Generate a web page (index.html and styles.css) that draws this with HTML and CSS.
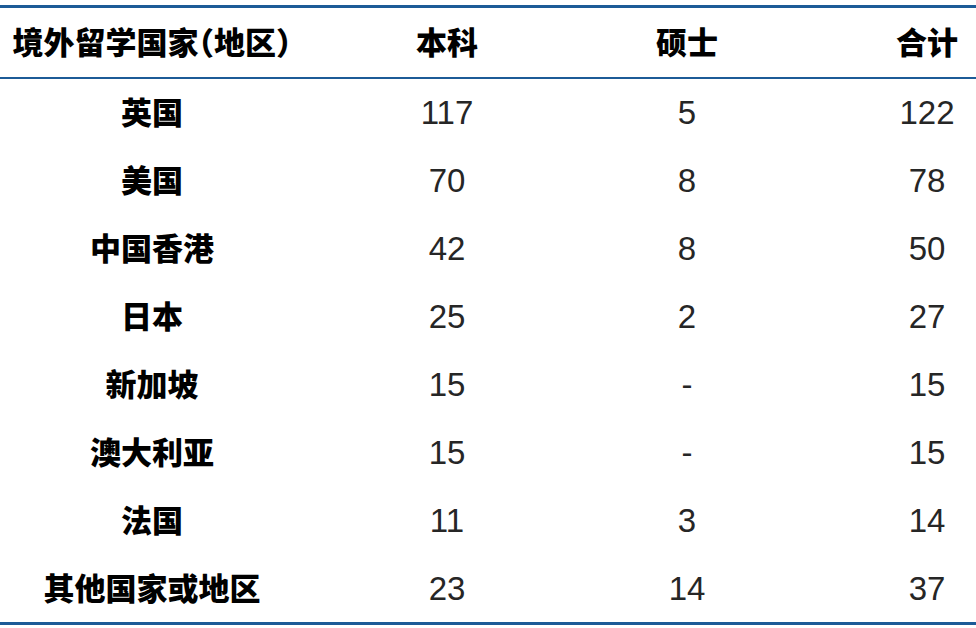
FILE: index.html
```html
<!DOCTYPE html>
<html lang="zh-CN">
<head>
<meta charset="utf-8">
<link rel="stylesheet" href="styles.css">
</head>
<body>
<div class="table">
  <div class="row head">
    <div class="cell c1">境外留学国家（地区）</div>
    <div class="cell c2">本科</div>
    <div class="cell c3">硕士</div>
    <div class="cell c4">合计</div>
  </div>
  <div class="body">
    <div class="row"><div class="cell c1">英国</div><div class="cell c2 num">117</div><div class="cell c3 num">5</div><div class="cell c4 num">122</div></div>
    <div class="row"><div class="cell c1">美国</div><div class="cell c2 num">70</div><div class="cell c3 num">8</div><div class="cell c4 num">78</div></div>
    <div class="row"><div class="cell c1">中国香港</div><div class="cell c2 num">42</div><div class="cell c3 num">8</div><div class="cell c4 num">50</div></div>
    <div class="row"><div class="cell c1">日本</div><div class="cell c2 num">25</div><div class="cell c3 num">2</div><div class="cell c4 num">27</div></div>
    <div class="row"><div class="cell c1">新加坡</div><div class="cell c2 num">15</div><div class="cell c3 num">-</div><div class="cell c4 num">15</div></div>
    <div class="row"><div class="cell c1">澳大利亚</div><div class="cell c2 num">15</div><div class="cell c3 num">-</div><div class="cell c4 num">15</div></div>
    <div class="row"><div class="cell c1">法国</div><div class="cell c2 num">11</div><div class="cell c3 num">3</div><div class="cell c4 num">14</div></div>
    <div class="row"><div class="cell c1">其他国家或地区</div><div class="cell c2 num">23</div><div class="cell c3 num">14</div><div class="cell c4 num">37</div></div>
  </div>
</div>
</body>
</html>
```
FILE: styles.css
```css
html, body {
  margin: 0;
  padding: 0;
  background: #ffffff;
}
body {
  width: 976px;
  height: 628px;
  overflow: hidden;
  font-family: "Noto Sans CJK SC", sans-serif;
}
.table {
  margin-top: 5px;
  border-top: 3px solid #1c5b97;
  border-bottom: 3px solid #1c5b97;
}
.row {
  display: grid;
  grid-template-columns: 304px 286px 194px 1fr;
  align-items: center;
  height: 67.9px;
}
.row.head {
  height: 69px;
  border-bottom: 2px solid #1c5b97;
}
.cell {
  text-align: center;
  white-space: nowrap;
  color: #111;
}
.c1, .head .cell {
  font-family: "Noto Sans CJK SC", sans-serif;
  font-weight: 900;
  font-size: 31px;
  line-height: 1;
  color: #000;
  padding-bottom: 4px;
}
.head .c1 {
  font-feature-settings: "halt";
}
.c4 {
  justify-self: end;
  width: 98px;
}
.num {
  font-family: "Liberation Sans Narrow", "Liberation Sans", sans-serif;
  font-weight: 400;
  font-size: 33px;
  line-height: 1;
  color: #262626;
}
```
